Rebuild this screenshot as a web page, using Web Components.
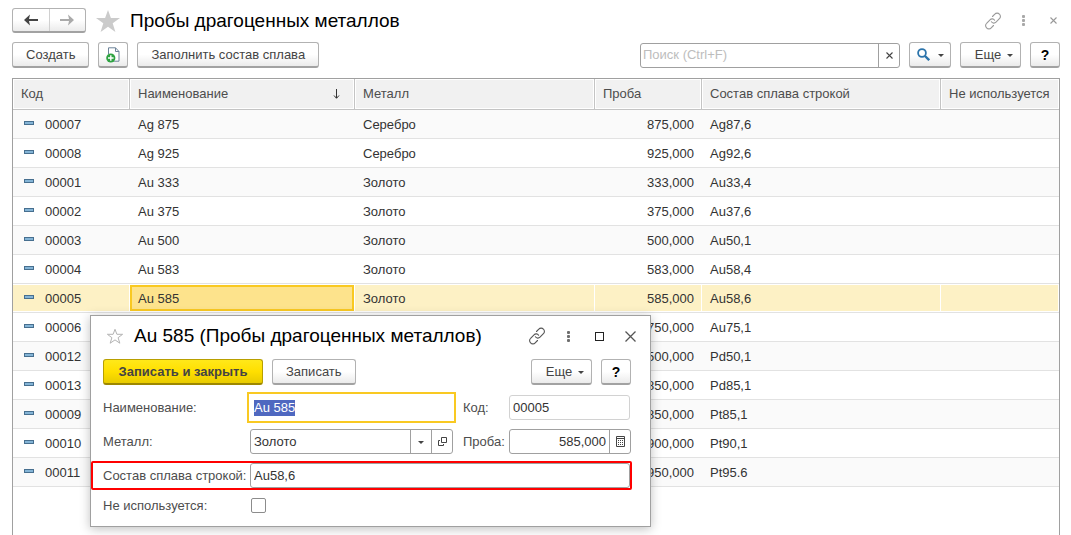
<!DOCTYPE html>
<html lang="ru">
<head>
<meta charset="utf-8">
<title>Пробы драгоценных металлов</title>
<style>
  body { margin: 0; background: #fff; color: #333; font: 13px/16px "Liberation Sans", Arial, sans-serif; }
</style>
</head>
<body>
<catalog-window></catalog-window>
<script>
const define = (name, html, setup) => {
  const template = document.createElement('template');
  template.innerHTML = html;
  customElements.define(name, class extends HTMLElement {
    constructor() {
      super();
      this.attachShadow({ mode: 'open' }).append(template.content.cloneNode(true));
    }
    connectedCallback() { if (setup) setup(this, this.shadowRoot); }
  });
};

const icons = {
  link: '<svg width="18" height="18" viewBox="0 0 18 18" fill="none" stroke="currentColor" stroke-width="1.1" stroke-linecap="round"><path d="M8.500 4.500l2.300-2.300a3 3 0 0 1 4.600 0 3 3 0 0 1 0 4.500L12 10.200a3 3 0 0 1-4.600-.4M9.500 13.500l-2.300 2.300a3 3 0 0 1-4.600 0 3 3 0 0 1 0-4.500L6 7.800a3 3 0 0 1 4.600.4"/></svg>',
  dots: '<svg width="3" height="11" viewBox="0 0 3 11" fill="currentColor" opacity=".85"><rect y="0" width="3" height="3" rx="1"/><rect y="4" width="3" height="3" rx="1"/><rect y="8" width="3" height="3" rx="1"/></svg>',
  close: '<svg width="11" height="11" viewBox="0 0 11 11" fill="none" stroke="currentColor" stroke-width="1.300"><path d="M.5.5l10 10M10.500.5l-10 10"/></svg>',
  cross: '<svg width="7" height="7" viewBox="0 0 7 7" fill="none" stroke="currentColor" stroke-width="1.100"><path d="M.5.5l6 6M6.500.5l-6 6"/></svg>',
  max: '<svg width="9" height="9" viewBox="0 0 9 9" fill="none" stroke="#222"><rect x=".5" y=".5" width="8" height="8"/></svg>',
  caret: '<svg width="6" height="5" viewBox="0 0 6 5" fill="currentColor"><path d="M0 2h6L3 5z"/></svg>',
  back: '<svg width="14" height="12" viewBox="0 0 14 12" fill="currentColor"><path d="M0 6 6 .5 5 5h9v2H5l1 4.500z"/></svg>',
  forward: '<svg width="14" height="12" viewBox="0 0 14 12" fill="currentColor"><path d="M14 6 8 .5 9 5H0v2h9l-1 4.500z"/></svg>',
  star: '<svg width="24" height="22" viewBox="0 0 24 22" fill="#cbcbcb"><path d="M12 0l2.900 8H24l-7.300 5.200L19.400 22 12 16.700 4.600 22l2.700-8.800L0 8h9.100z"/></svg>',
  starLine: '<svg width="18" height="17" viewBox="0 0 18 17" fill="none" stroke="#b3b3b3"><path d="M9 1.300l1.900 5h5.700l-4.500 3.400 1.700 5.500L9 11.900l-4.800 3.300 1.700-5.500L1.400 6.300h5.700z"/></svg>',
  sheet: '<svg width="14" height="16" viewBox="0 0 14 16" fill="none"><path d="M2.500 7V.8h7l3.500 3.700V14.200H8" fill="#fff" stroke="#6d8399"/><path d="M9.500.8v3.700H13" stroke="#6d8399"/><circle cx="4.800" cy="11" r="4.600" fill="#2fa343"/><path d="M4.800 8.200v5.600M2 11h5.600" stroke="#fff" stroke-width="1.400"/></svg>',
  search: '<svg width="13" height="13" viewBox="0 0 13 13" fill="none" stroke="#2c74ab"><circle cx="5" cy="5" r="3.900" stroke-width="1.800"/><path d="M8 8l4.200 4.200" stroke-width="2.400"/></svg>',
  open: '<svg width="9" height="9" viewBox="0 0 9 9" fill="none" stroke="#444"><path d="M3.500.5h5v5h-5zM2 3.500H.5v5h5V7"/></svg>',
  calc: '<svg width="9" height="11" viewBox="0 0 9 11" fill="none" stroke="#444"><path d="M.5.5h8v10h-8zM0 2.500h9"/><path d="M2 4.500h5M2 6.500h5M2 8.500h5" stroke-dasharray="1 1"/></svg>',
  sort: '<svg width="7" height="10" viewBox="0 0 7 10" fill="none" stroke="#333"><path d="M3.500 0v9M1 6.500l2.500 2.800L6 6.500"/></svg>',
  item: '<svg width="10" height="4" viewBox="0 0 10 4"><rect x=".5" y=".5" width="9" height="3" fill="#84b4d6" stroke="#476f8f"/></svg>'
};

define('ui-icon', '<style>:host{display:inline-flex;align-items:center;justify-content:center} svg{display:block}</style>',
  (host, root) => root.append(document.createRange().createContextualFragment(icons[host.getAttribute('name')])));

define('ui-button', `<style>
  :host { display: block; flex: none; }
  button { box-sizing: border-box; width: 100%; height: 26px; margin: 0; padding: 0 13px; display: flex; align-items: center; justify-content: center; gap: 6px;
    border: 1px solid #b2b2b2; border-bottom: 2px solid #a2a2a2; border-radius: 3px;
    background: linear-gradient(#fff 50%, #ebebeb); color: #444; font: inherit; white-space: nowrap; }
  :host([compact]) { width: 42px; }
  :host([compact]) button { padding: 0; gap: 8px; }
  :host([menu]) { width: 61px; }
  :host([menu]) button { padding: 0 0 0 7px; }
  :host([square]) { width: 30px; }
  :host([square]) button { padding: 0; }
  :host([help]) button { color: #000; font-size: 14px; font-weight: bold; }
  :host([primary]) { width: 160px; }
  :host([primary]) button { border-color: #b89f00; border-bottom-color: #9d8700; background: linear-gradient(#ffe81a, #ffdf00 50%, #e8cb00); font-weight: bold; }
  </style><button type="button"><slot></slot></button>`,
  (host, root) => { if (host.hasAttribute('label')) root.querySelector('button').setAttribute('aria-label', host.getAttribute('label')); });

define('nav-buttons', `<style>
  :host { display: flex; box-sizing: border-box; height: 25px; width: 74px; border: 1px solid #b2b2b2; border-bottom: 2px solid #a2a2a2; border-radius: 3px; background: linear-gradient(#fff 50%, #ebebeb); }
  button { flex: 1; padding: 0; border: 0; background: none; color: #444; display: grid; place-items: center; }
  button + button { border-left: 1px solid #d0d0d0; color: #aaa; }
  </style><button type="button" aria-label="Назад"><ui-icon name="back"></ui-icon></button><button type="button" aria-label="Вперед"><ui-icon name="forward"></ui-icon></button>`);

define('window-title', `<style>
  :host { display: flex; align-items: center; }
  h1 { margin: 0; flex: 1; color: #000; font: inherit; font-size: 19px; line-height: 24px; white-space: nowrap; }
  </style><h1><slot></slot></h1>`);

define('tool-icon', `<style>
  :host { display: block; flex: none; }
  button { width: 20px; height: 20px; padding: 0; border: 0; background: none; color: inherit; display: grid; place-items: center; }
  </style><button type="button"><slot></slot></button>`,
  (host, root) => root.querySelector('button').setAttribute('aria-label', host.getAttribute('label')));

define('search-box', `<style>
  :host { display: flex; box-sizing: border-box; width: 260px; height: 25px; border: 1px solid #a0a0a0; border-radius: 3px; background: #fff; }
  input { flex: 1; min-width: 0; padding: 0 2px; border: 0; outline: 0; background: none; font: inherit; }
  input::placeholder { color: #bdbdbd; }
  button { width: 21px; padding: 0; border: 0; border-left: 1px solid #a0a0a0; background: none; color: #444; display: grid; place-items: center; }
  </style><input type="text" placeholder="Поиск (Ctrl+F)" aria-label="Поиск"><button type="button" aria-label="Очистить"><ui-icon name="cross"></ui-icon></button>`);

const samples = [
  ['00007', 'Ag 875', 'Серебро', '875,000', 'Ag87,6'],
  ['00008', 'Ag 925', 'Серебро', '925,000', 'Ag92,6'],
  ['00001', 'Au 333', 'Золото', '333,000', 'Au33,4'],
  ['00002', 'Au 375', 'Золото', '375,000', 'Au37,6'],
  ['00003', 'Au 500', 'Золото', '500,000', 'Au50,1'],
  ['00004', 'Au 583', 'Золото', '583,000', 'Au58,4'],
  ['00005', 'Au 585', 'Золото', '585,000', 'Au58,6'],
  ['00006', '', '', '750,000', 'Au75,1'],
  ['00012', '', '', '500,000', 'Pd50,1'],
  ['00013', '', '', '850,000', 'Pd85,1'],
  ['00009', '', '', '850,000', 'Pt85,1'],
  ['00010', '', '', '900,000', 'Pt90,1'],
  ['00011', '', '', '950,000', 'Pt95.6']
];

define('samples-table', `<style>
  :host { display: block; border: 1px solid #a0a0a0; border-bottom: 0; }
  table { width: 100%; table-layout: fixed; border-collapse: separate; border-spacing: 0; }
  .code { width: 117px; } .name { width: 225px; } .fineness { width: 107px; } .alloy { width: 239px; } .unused { width: 118px; }
  th, td { box-sizing: border-box; padding: 0 8px; text-align: left; font-weight: normal; white-space: nowrap; }
  th { height: 31px; background: #f1f1f1; color: #4d4d4d; border-bottom: 1px solid #c4c4c4; border-right: 1px solid #c4c4c4; box-shadow: inset 0 0 0 1px #fff; }
  th:last-child { border-right: 0; }
  th div { display: flex; align-items: center; justify-content: space-between; padding-right: 6px; }
  td { height: 29px; padding-top: 2px; border-bottom: 1px solid #e2e2e2; }
  tr:nth-child(odd) td { background: #fafafa; }
  td:first-child ui-icon { margin: 0 11px 0 3px; vertical-align: 4px; }
  td:nth-child(4) { text-align: right; }
  tr.current td { background: #fdf1c5; box-shadow: inset 0 1px #fff, inset -1px -1px #fff; }
  tr.current td.cell { background: #fde38c; box-shadow: inset 0 1px #fff, inset -1px -1px #fff; padding: 0 1px 0 0; }
  .cell div { box-sizing: border-box; height: 26px; padding: 0 6px; border: 2px solid #f9c922; line-height: 24px; }
  </style>
  <table>
    <colgroup><col class="code"><col class="name"><col><col class="fineness"><col class="alloy"><col class="unused"></colgroup>
    <thead><tr><th>Код</th><th><div>Наименование<ui-icon name="sort"></ui-icon></div></th><th>Металл</th><th>Проба</th><th>Состав сплава строкой</th><th>Не используется</th></tr></thead>
    <tbody></tbody>
  </table>`,
  (host, root) => {
    root.querySelector('tbody').innerHTML = samples.map(([code, name, metal, fineness, alloy]) => {
      const current = code === '00005';
      return `<tr class="${current ? 'current' : ''}"><td><ui-icon name="item"></ui-icon>${code}</td>` +
        (current ? `<td class="cell"><div>${name}</div></td>` : `<td>${name}</td>`) +
        `<td>${metal}</td><td>${fineness}</td><td>${alloy}</td><td></td></tr>`;
    }).join('');
  });

define('sample-dialog', `<style>
  :host { display: block; box-sizing: border-box; width: 561px; padding: 7px 19px 4px 12px; border: 1px solid #a0a0a0; background: #fff; box-shadow: 0 2px 10px rgba(0,0,0,.25); }
  header { display: flex; align-items: center; gap: 10px; margin-left: 3px; height: 26px; }
  window-title { flex: 1; }
  .tools { display: flex; gap: 11px; margin-right: -9px; color: #555; }
  .commands { display: flex; gap: 9px; margin: 10px 0 10px; }
  .space { flex: 1; }
  form { display: grid; grid-template-columns: 147px 203px 56px 1fr; grid-auto-rows: 25px; row-gap: 9px; align-items: center; color: #4d4d4d; }
  .second { padding-left: 10px; }
  input, select { font: inherit; color: #333; margin: 0; }
  .box { box-sizing: border-box; display: flex; height: 25px; border: 1px solid #a0a0a0; border-radius: 3px; background: #fff; min-width: 0; }
  .box input, .box select { flex: 1; min-width: 0; width: 0; border: 0; outline: 0; padding: 0 3px; background: none; appearance: none; }
  .box button { width: 21px; padding: 0; border: 0; border-left: 1px solid #a0a0a0; background: none; color: #444; display: grid; place-items: center; }
  .focused { border-color: #fff; border-radius: 0; outline: 2px solid #f9c922; outline-offset: 1px; }
  .focused input::selection { background: #4f68c0; color: #fff; }
  .readonly { border-color: #d2d2d2; margin-right: 1px; }
  .number input { text-align: right; }
  .wide { grid-column: 2 / -1; margin-right: 1px; }
  .marked { grid-column: 1 / -1; display: grid; grid-template-columns: subgrid; align-items: center; position: relative; }
  .marked::after { content: ""; position: absolute; inset: -2px -1px -2px -12px; border: 2px solid #f00; border-radius: 2px; pointer-events: none; }
  .flag { grid-column: 1 / -1; display: grid; grid-template-columns: subgrid; align-items: center; height: 17px; align-self: start; }
  .flag input { appearance: none; width: 15px; height: 15px; margin: 0 0 0 1px; border: 1px solid #8c8c8c; border-radius: 2px; background: #fff; }
  </style>
  <header><ui-icon name="starLine"></ui-icon><window-title>Au 585 (Пробы драгоценных металлов)</window-title>
    <div class="tools"><tool-icon label="Ссылка"><ui-icon name="link"></ui-icon></tool-icon><tool-icon label="Меню"><ui-icon name="dots"></ui-icon></tool-icon><tool-icon label="Развернуть"><ui-icon name="max"></ui-icon></tool-icon><tool-icon label="Закрыть"><ui-icon name="close"></ui-icon></tool-icon></div>
  </header>
  <div class="commands"><ui-button primary>Записать и закрыть</ui-button><ui-button>Записать</ui-button><span class="space"></span><ui-button menu>Еще<ui-icon name="caret"></ui-icon></ui-button><ui-button square help>?</ui-button></div>
  <form>
    <label for="name">Наименование:</label><div class="box focused"><input id="name" type="text" value="Au 585"></div>
    <label class="second" for="code">Код:</label><div class="box readonly"><input id="code" type="text" value="00005" readonly></div>
    <label for="metal">Металл:</label><div class="box"><select id="metal"><option>Золото</option><option>Серебро</option></select><button type="button" aria-label="Выбрать"><ui-icon name="caret"></ui-icon></button><button type="button" aria-label="Открыть"><ui-icon name="open"></ui-icon></button></div>
    <label class="second" for="fineness">Проба:</label><div class="box number"><input id="fineness" type="text" value="585,000"><button type="button" aria-label="Калькулятор"><ui-icon name="calc"></ui-icon></button></div>
    <div class="marked"><label for="alloy">Состав сплава строкой:</label><div class="box wide"><input id="alloy" type="text" value="Au58,6"></div></div>
    <div class="flag"><label for="unused">Не используется:</label><input id="unused" type="checkbox"></div>
  </form>`,
  (host, root) => {
    const name = root.getElementById('name');
    name.focus({ preventScroll: true });
    name.select();
  });

define('catalog-window', `<style>
  :host { display: flex; flex-direction: column; box-sizing: border-box; min-height: 100vh; padding: 8px 11px 0 12px; position: relative; }
  header { display: flex; align-items: center; gap: 10px; height: 25px; }
  window-title { flex: 1; }
  .tools { display: flex; gap: 10px; margin-right: -3px; color: #999; }
  .commands { display: flex; align-items: center; gap: 9px; margin: 9px 0 10px; }
  .space { flex: 1; }
  samples-table { flex: 1; }
  sample-dialog { position: absolute; left: 90px; top: 315px; }
  </style>
  <header><nav-buttons></nav-buttons><ui-icon name="star"></ui-icon><window-title>Пробы драгоценных металлов</window-title>
    <div class="tools"><tool-icon label="Ссылка"><ui-icon name="link"></ui-icon></tool-icon><tool-icon label="Меню"><ui-icon name="dots"></ui-icon></tool-icon><tool-icon label="Закрыть"><ui-icon name="cross"></ui-icon></tool-icon></div>
  </header>
  <div class="commands"><ui-button>Создать</ui-button><ui-button square label="Создать копированием"><ui-icon name="sheet"></ui-icon></ui-button><ui-button>Заполнить состав сплава</ui-button><span class="space"></span><search-box></search-box><ui-button compact label="Найти"><ui-icon name="search"></ui-icon><ui-icon name="caret"></ui-icon></ui-button><ui-button menu>Еще<ui-icon name="caret"></ui-icon></ui-button><ui-button square help>?</ui-button></div>
  <samples-table></samples-table>
  <sample-dialog></sample-dialog>`);
</script>
</body>
</html>
